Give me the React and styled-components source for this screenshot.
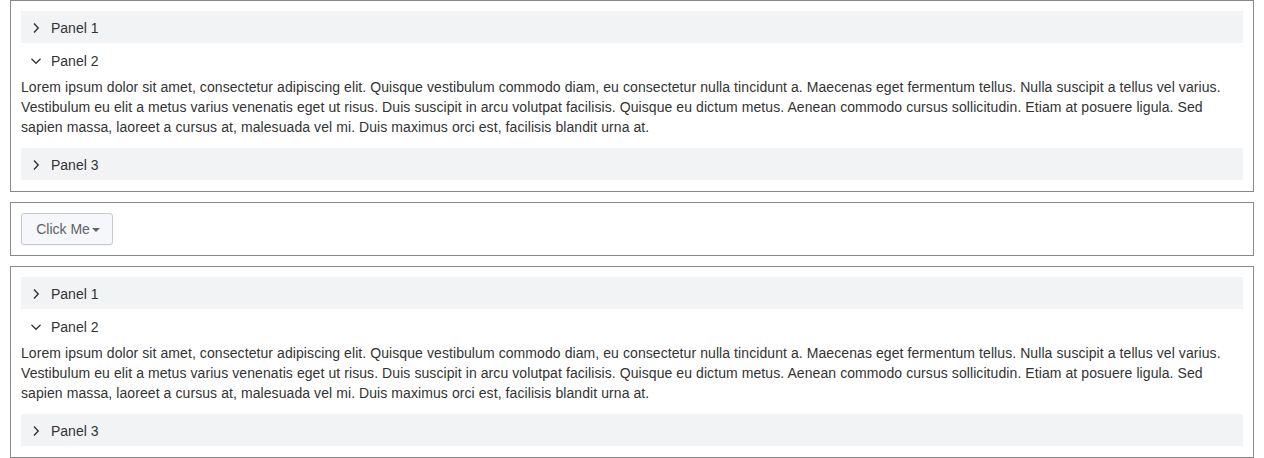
import React, { useState } from "react";
import styled, { createGlobalStyle } from "styled-components";

const Global = createGlobalStyle`
  html, body { margin: 0; padding: 0; background: #fff; }
  body { font-family: "Liberation Sans", Arial, sans-serif; font-size: 14px; color: #333; }
`;

const Page = styled.div`
  display: flex;
  flex-direction: column;
  gap: 10px;
  padding: 0 10px;
`;

const Box = styled.div`
  border: 1px solid #888;
  padding: 10px;
`;

const Header = styled.div`
  display: flex;
  align-items: center;
  height: 32px;
  margin-bottom: 1px;
  padding-left: 10px;
  gap: 10px;
  background: ${(p) => (p.$open ? "transparent" : "#f2f3f5")};
  color: #333;
  cursor: pointer;
  user-select: none;
  span { padding-top: 1px; }
`;

const IconWrap = styled.span`
  display: inline-flex;
  width: 10px;
  height: 10px;
  align-items: center;
  justify-content: center;
`;

const Content = styled.div`
  padding: 0 0 11px;
  line-height: 20px;
  letter-spacing: 0.08px;
  color: #333;
`;

const Button = styled.button`
  font-family: "Liberation Sans", Arial, sans-serif;
  font-size: 14px;
  color: #606266;
  background: #f5f7fa;
  border: 1px solid #c5cad1;
  border-radius: 3px;
  height: 32px;
  width: 92px;
  padding: 0 0 0 2px;
  display: inline-flex;
  align-items: center;
  justify-content: center;
  gap: 2px;
  box-shadow: 0 1px 1px rgba(0,0,0,0.05);
`;

const Caret = styled.span`
  width: 0;
  height: 0;
  border-left: 4px solid transparent;
  border-right: 4px solid transparent;
  border-top: 4px solid #606266;
  margin-top: 1px;
`;

const Chevron = ({ open }) => (
  <IconWrap>
    {open ? (
      <svg width="11" height="10" viewBox="0 0 11 10">
        <path d="M0.5 2.5 L5.5 7.5 L10.5 2.5" fill="none" stroke="#333" strokeWidth="1.4" />
      </svg>
    ) : (
      <svg width="10" height="10" viewBox="0 0 10 10">
        <path d="M3 0.5 L7.2 5 L3 9.5" fill="none" stroke="#333" strokeWidth="1.4" />
      </svg>
    )}
  </IconWrap>
);

const text =
  "Lorem ipsum dolor sit amet, consectetur adipiscing elit. Quisque vestibulum commodo diam, eu consectetur nulla tincidunt a. Maecenas eget fermentum tellus. Nulla suscipit a tellus vel varius. Vestibulum eu elit a metus varius venenatis eget ut risus. Duis suscipit in arcu volutpat facilisis. Quisque eu dictum metus. Aenean commodo cursus sollicitudin. Etiam at posuere ligula. Sed sapien massa, laoreet a cursus at, malesuada vel mi. Duis maximus orci est, facilisis blandit urna at.";

function Accordion() {
  const [open, setOpen] = useState(2);
  return (
    <Box>
      {[1, 2, 3].map((n) => (
        <React.Fragment key={n}>
          <Header $open={open === n} onClick={() => setOpen(open === n ? 0 : n)}>
            <Chevron open={open === n} />
            <span>Panel {n}</span>
          </Header>
          {open === n && <Content>{text}</Content>}
        </React.Fragment>
      ))}
    </Box>
  );
}

export default function App() {
  return (
    <>
      <Global />
      <Page>
        <Accordion />
        <Box>
          <Button>
            Click Me<Caret />
          </Button>
        </Box>
        <Accordion />
      </Page>
    </>
  );
}
